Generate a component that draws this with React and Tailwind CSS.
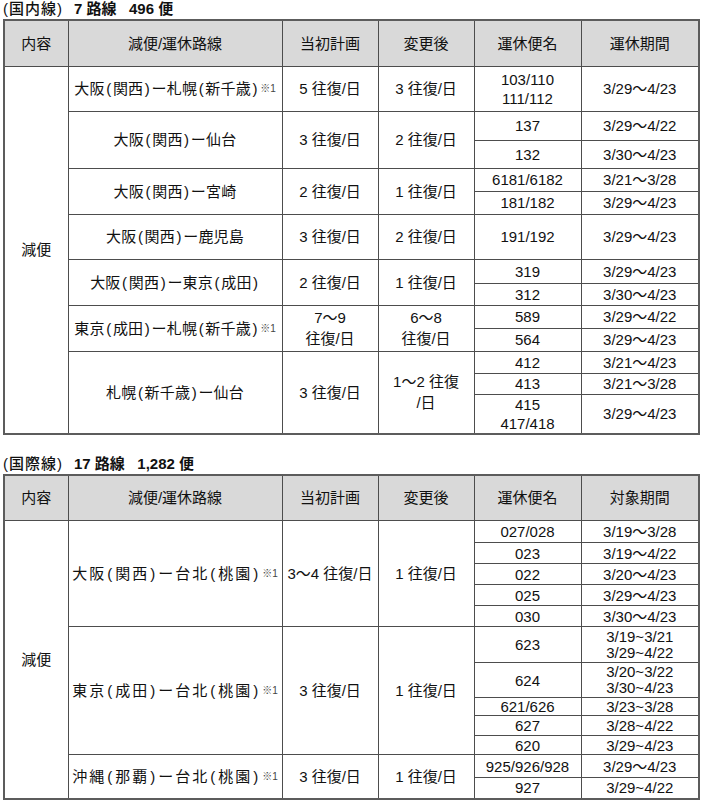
import React from "react";

const FONT = { fontFamily: '"Liberation Sans", "Noto Sans CJK JP", sans-serif' };

const cols = [64, 214, 96, 96, 107, 118];

function Sup() {
  return <sup className="text-[10px] tracking-normal text-[#444] relative -top-[2px] ml-[1px]">※1</sup>;
}

function Route({ text, wide }) {
  const parts = text.split(/([()])/);
  return (
    <span className={wide ? "tracking-[2px]" : "tracking-[0.2px]"}>
      {parts.map((p, i) =>
        p === "(" || p === ")" ? (
          <span key={i} className={wide ? "mx-[1px]" : "mx-[1.5px]"}>{p}</span>
        ) : (
          <React.Fragment key={i}>{p}</React.Fragment>
        )
      )}
    </span>
  );
}

const B = "border border-[#4d4d4d]";
const BL = "border border-[#4d4d4d] border-t-[#8a8a8a]";

function Th({ children }) {
  return (
    <th className={`${B} bg-[#d9d9d9] font-normal text-[15px] text-center align-middle`}>{children}</th>
  );
}

function Td({ children, rs, cls = "", light }) {
  return (
    <td rowSpan={rs} className={`${light ? BL : B} text-center align-middle p-0 ${cls}`}>
      {children}
    </td>
  );
}

function Header({ last }) {
  return (
    <tr className="h-[46px]">
      <Th>内容</Th>
      <Th>減便/運休路線</Th>
      <Th>当初計画</Th>
      <Th>変更後</Th>
      <Th>運休便名</Th>
      <Th>{last}</Th>
    </tr>
  );
}

function Table({ children, last }) {
  return (
    <table className="table-fixed border-collapse border-2 border-[#5c5c5c] text-[15px] leading-[17px] text-[#111]" style={{ width: 695 }}>
      <colgroup>
        {cols.map((w, i) => (
          <col key={i} style={{ width: w }} />
        ))}
      </colgroup>
      <thead>
        <Header last={last} />
      </thead>
      <tbody>{children}</tbody>
    </table>
  );
}

const R = "whitespace-nowrap";

export default function App() {
  return (
    <div className="bg-white w-[701px] h-[800px] pl-[3px] pt-0" style={FONT}>
      <div className="h-[19px] text-[15px] leading-[17px] text-[#111] whitespace-pre flex">
        <span className="font-medium tracking-[1px]">(国内線)</span>
        <span className="font-bold ml-[11px]">7 路線   496 便</span>
      </div>
      <Table last="運休期間">
        <tr className="h-[45px]">
          <Td rs={14}>減便</Td>
          <Td cls={R}><Route text="大阪(関西)ー札幌(新千歳)" /><Sup /></Td>
          <Td>5 往復/日</Td>
          <Td>3 往復/日</Td>
          <Td cls="leading-[19px]">103/110<br />111/112</Td>
          <Td>3/29～4/23</Td>
        </tr>
        <tr className="h-[29px]">
          <Td rs={2} cls={R}><Route text="大阪(関西)ー仙台" /></Td>
          <Td rs={2}>3 往復/日</Td>
          <Td rs={2}>2 往復/日</Td>
          <Td>137</Td>
          <Td>3/29～4/22</Td>
        </tr>
        <tr className="h-[28px]">
          <Td>132</Td>
          <Td>3/30～4/23</Td>
        </tr>
        <tr className="h-[23px]">
          <Td rs={2} cls={R}><Route text="大阪(関西)ー宮崎" /></Td>
          <Td rs={2}>2 往復/日</Td>
          <Td rs={2}>1 往復/日</Td>
          <Td>6181/6182</Td>
          <Td>3/21～3/28</Td>
        </tr>
        <tr className="h-[23px]">
          <Td light>181/182</Td>
          <Td light>3/29～4/23</Td>
        </tr>
        <tr className="h-[45px]">
          <Td cls={R}><Route text="大阪(関西)ー鹿児島" /></Td>
          <Td>3 往復/日</Td>
          <Td>2 往復/日</Td>
          <Td>191/192</Td>
          <Td>3/29～4/23</Td>
        </tr>
        <tr className="h-[24px]">
          <Td rs={2} cls={R}><Route text="大阪(関西)ー東京(成田)" /></Td>
          <Td rs={2}>2 往復/日</Td>
          <Td rs={2}>1 往復/日</Td>
          <Td>319</Td>
          <Td>3/29～4/23</Td>
        </tr>
        <tr className="h-[22px]">
          <Td>312</Td>
          <Td>3/30～4/23</Td>
        </tr>
        <tr className="h-[23px]">
          <Td rs={2} cls={R}><Route text="東京(成田)ー札幌(新千歳)" /><Sup /></Td>
          <Td rs={2} cls="leading-[21px]">7～9<br />往復/日</Td>
          <Td rs={2} cls="leading-[21px]">6～8<br />往復/日</Td>
          <Td>589</Td>
          <Td>3/29～4/22</Td>
        </tr>
        <tr className="h-[23px]">
          <Td light>564</Td>
          <Td light>3/29～4/23</Td>
        </tr>
        <tr className="h-[22px]">
          <Td rs={3} cls={R}><Route text="札幌(新千歳)ー仙台" /></Td>
          <Td rs={3}>3 往復/日</Td>
          <Td rs={3} cls="leading-[21px]">1～2 往復<br />/日</Td>
          <Td>412</Td>
          <Td>3/21～4/23</Td>
        </tr>
        <tr className="h-[21px]">
          <Td light>413</Td>
          <Td light>3/21～3/28</Td>
        </tr>
        <tr className="h-[37px]">
          <Td light cls="leading-[19px]">415<br />417/418</Td>
          <Td light>3/29～4/23</Td>
        </tr>
      </Table>

      <div className="h-[19px] mt-[20px] text-[15px] leading-[17px] text-[#111] whitespace-pre flex">
        <span className="font-medium tracking-[1px]">(国際線)</span>
        <span className="font-bold ml-[11px]">17 路線   1,282 便</span>
      </div>
      <Table last="対象期間">
        <tr className="h-[22px]">
          <Td rs={12}>減便</Td>
          <Td rs={5} cls={R}><Route wide text="大阪(関西)ー台北(桃園)" /><Sup /></Td>
          <Td rs={5}>3～4 往復/日</Td>
          <Td rs={5}>1 往復/日</Td>
          <Td>027/028</Td>
          <Td>3/19～3/28</Td>
        </tr>
        <tr className="h-[21px]">
          <Td light>023</Td>
          <Td light>3/19～4/22</Td>
        </tr>
        <tr className="h-[21px]">
          <Td>022</Td>
          <Td>3/20～4/23</Td>
        </tr>
        <tr className="h-[21px]">
          <Td light>025</Td>
          <Td light>3/29～4/23</Td>
        </tr>
        <tr className="h-[21px]">
          <Td>030</Td>
          <Td>3/30～4/23</Td>
        </tr>
        <tr className="h-[36px]">
          <Td rs={5} cls={R}><Route wide text="東京(成田)ー台北(桃園)" /><Sup /></Td>
          <Td rs={5}>3 往復/日</Td>
          <Td rs={5}>1 往復/日</Td>
          <Td>623</Td>
          <Td cls="leading-[16px]">3/19~3/21<br />3/29~4/22</Td>
        </tr>
        <tr className="h-[35px]">
          <Td light>624</Td>
          <Td light cls="leading-[16px]">3/20~3/22<br />3/30~4/23</Td>
        </tr>
        <tr className="h-[18px]">
          <Td>621/626</Td>
          <Td>3/23~3/28</Td>
        </tr>
        <tr className="h-[20px]">
          <Td>627</Td>
          <Td>3/28~4/22</Td>
        </tr>
        <tr className="h-[19px]">
          <Td>620</Td>
          <Td>3/29~4/23</Td>
        </tr>
        <tr className="h-[23px]">
          <Td rs={2} cls={R}><Route wide text="沖縄(那覇)ー台北(桃園)" /><Sup /></Td>
          <Td rs={2}>3 往復/日</Td>
          <Td rs={2}>1 往復/日</Td>
          <Td>925/926/928</Td>
          <Td>3/29～4/23</Td>
        </tr>
        <tr className="h-[21px]">
          <Td light>927</Td>
          <Td light>3/29~4/22</Td>
        </tr>
      </Table>
    </div>
  );
}
